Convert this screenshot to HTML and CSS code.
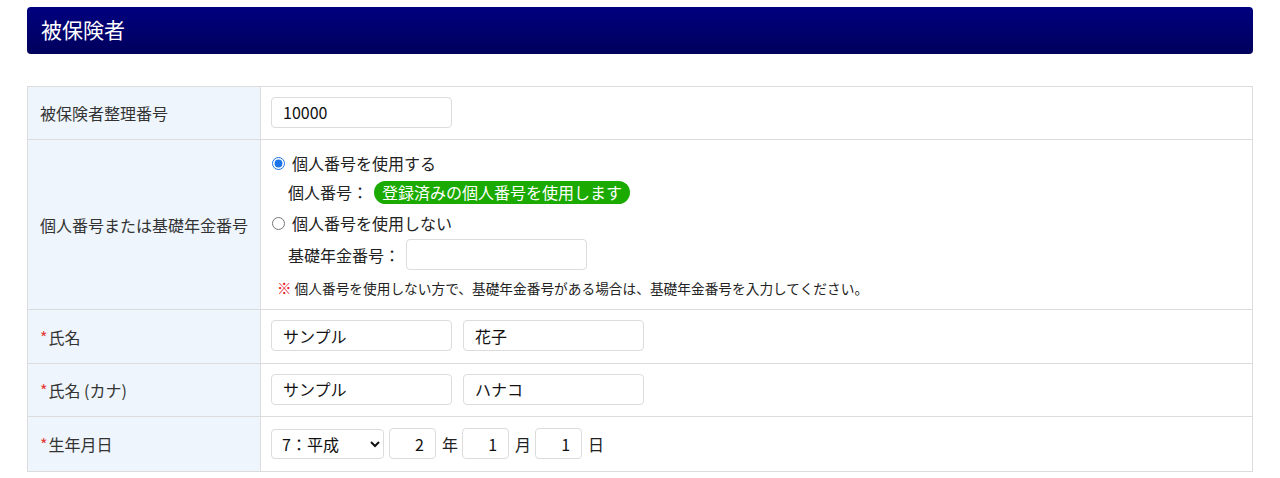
FILE: index.html
```html
<!DOCTYPE html>
<html lang="ja">
<head>
<meta charset="utf-8">
<title>被保険者</title>
<link rel="stylesheet" href="styles.css">
</head>
<body>
<div class="page">
  <h2 class="section-title">被保険者</h2>
  <table class="form-table">
    <tr class="row-1">
      <th>被保険者整理番号</th>
      <td><input class="txt w-l" type="text" value="10000"></td>
    </tr>
    <tr>
      <th>個人番号または基礎年金番号</th>
      <td class="stack-cell">
        <div class="stack">
          <label class="radio-line"><input type="radio" name="kb" checked><span>個人番号を使用する</span></label>
          <div class="sub-line"><span class="sub-label">個人番号：</span><span class="badge">登録済みの個人番号を使用します</span></div>
          <label class="radio-line l3"><input type="radio" name="kb"><span>個人番号を使用しない</span></label>
          <div class="sub-line l4"><span class="sub-label">基礎年金番号：</span><input class="txt w-l" type="text"></div>
          <p class="note"><span class="mark">※</span> 個人番号を使用しない方で、基礎年金番号がある場合は、基礎年金番号を入力してください。</p>
        </div>
      </td>
    </tr>
    <tr>
      <th><span class="req">*</span>氏名</th>
      <td><div class="pair"><input class="txt w-l" type="text" value="サンプル"><input class="txt w-l" type="text" value="花子"></div></td>
    </tr>
    <tr class="row-4">
      <th><span class="req">*</span>氏名 (カナ)</th>
      <td><div class="pair"><input class="txt w-l" type="text" value="サンプル"><input class="txt w-l" type="text" value="ハナコ"></div></td>
    </tr>
    <tr class="row-5">
      <th><span class="req">*</span>生年月日</th>
      <td>
        <div class="date">
          <select class="era"><option>7：平成</option></select>
          <input class="txt num" type="text" value="2"><span class="unit">年</span>
          <input class="txt num" type="text" value="1"><span class="unit">月</span>
          <input class="txt num" type="text" value="1"><span class="unit">日</span>
        </div>
      </td>
    </tr>
  </table>
</div>
</body>
</html>
```
FILE: styles.css
```css
* { box-sizing: border-box; }
html, body { margin: 0; padding: 0; background: #fff; }
body {
  font-family: "Noto Sans CJK JP", "Noto Sans", sans-serif;
  color: #222;
  font-size: 16px;
  line-height: 24px;
}
.page { padding: 7px 27px 0 27px; }
.section-title {
  margin: 0;
  height: 47px;
  line-height: 45px;
  padding-left: 14px;
  font-size: 21px;
  font-weight: normal;
  color: #fff;
  border-radius: 4px;
  background: linear-gradient(#000080, #00005c);
}
.form-table {
  margin-top: 32px;
  width: 100%;
  border-collapse: collapse;
  border: 1px solid #dcdcdc;
}
.form-table th, .form-table td {
  border: 1px solid #dcdcdc;
  vertical-align: middle;
}
.form-table th {
  width: 233px;
  background: #eef5fc;
  font-weight: normal;
  text-align: left;
  padding: 0 10px 0 12px;
  color: #333;
  font-size: 16px;
}
.form-table td {
  padding: 9px 10px 11px 10px;
  height: 54px;
}
.row-1 td { height: 53px; }
.row-4 td { height: 53px; }
.row-5 td { height: 55px; padding-top: 10px; }
.req { color: #e53935; margin-right: 1px; }
.txt {
  font-family: inherit;
  font-size: 16px;
  color: #111;
  height: 31px;
  border: 1px solid #dcdcdc;
  border-radius: 4px;
  padding: 0 11px;
  background: #fff;
  margin: 0;
  outline: none;
}
.w-l { width: 181px; }
.pair { display: flex; gap: 11px; }
.form-table td.stack-cell { padding-top: 11px; padding-bottom: 11px; height: auto; }
.stack { display: flex; flex-direction: column; }
.radio-line {
  display: flex;
  align-items: center;
  height: 24px;
  color: #222;
}
.radio-line input {
  margin: 0 7px 0 1px;
  width: 13px;
  height: 13px;
  accent-color: #1a73e8;
}
.l3 { margin-top: 7px; }
.sub-line {
  display: flex;
  align-items: center;
  padding-left: 17px;
  margin-top: 5px;
  height: 24px;
}
.sub-line.l4 { margin-top: 4px; height: 31px; }
.sub-label { margin-right: 6px; }
.badge {
  background: #1aaa00;
  color: #fff;
  border-radius: 12px;
  height: 23px;
  line-height: 23px;
  padding: 0 8px;
}
.note {
  margin: 8px 0 0 0;
  padding-left: 6px;
  font-size: 13.7px;
  line-height: 19px;
  color: #222;
}
.mark { color: #e8141c; font-weight: bold; font-size: 14.5px; }
.date { display: flex; align-items: center; }
.era {
  font-family: inherit;
  font-size: 16px;
  color: #111;
  width: 113px;
  height: 30px;
  border: 1px solid #dcdcdc;
  border-radius: 4px;
  background: #fff;
  padding: 0 4px 0 6px;
  margin: 0 5px 0 0;
}
.num {
  width: 47px;
  text-align: right;
  padding-right: 11px;
}
.unit { margin: 0 4px 0 6px; }
```
